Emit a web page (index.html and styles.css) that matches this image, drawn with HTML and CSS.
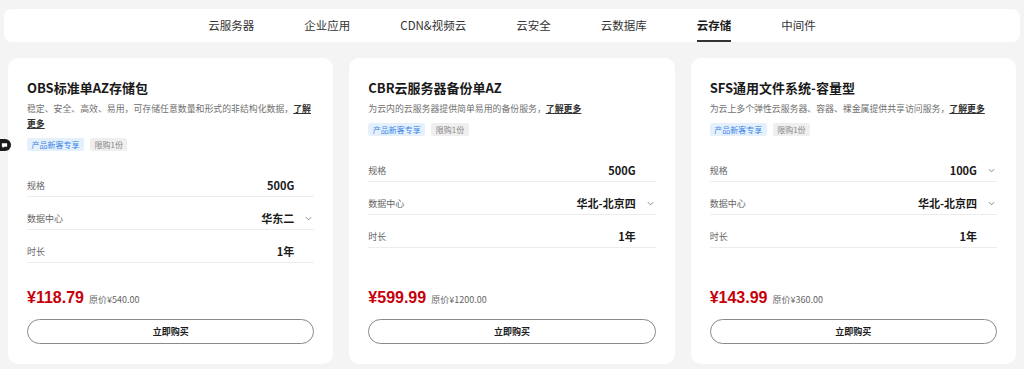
FILE: index.html
```html
<!DOCTYPE html>
<html lang="zh-CN">
<head>
  <meta charset="UTF-8" />
  <meta name="viewport" content="width=device-width, initial-scale=1.0"/>
  <title>云存储</title>
  <link rel="stylesheet" href="styles.css">
</head>
<body>
  <!-- Category tabs -->
  <nav class="tabs">
    <a class="tab">云服务器</a>
    <a class="tab">企业应用</a>
    <a class="tab">CDN&amp;视频云</a>
    <a class="tab">云安全</a>
    <a class="tab">云数据库</a>
    <a class="tab active">云存储</a>
    <a class="tab">中间件</a>
  </nav>

  <!-- Floating chat pill (sits on the left edge) -->
  <div class="chat-pill">
    <svg viewBox="0 0 8 8"><path d="M1 1.5h6v4H3.5L2 7V5.5H1z"/></svg>
  </div>

  <!-- Product cards -->
  <div class="cards">
    <div class="card">
      <h3 class="card-title">OBS标准单AZ存储包</h3>
      <p class="card-desc">稳定、安全、高效、易用，可存储任意数量和形式的非结构化数据，<a class="more">了解更多</a></p>
      <div class="tags">
        <span class="tag tag-blue">产品新客专享</span>
        <span class="tag tag-gray">限购1份</span>
      </div>
      <div class="specs">
        <div class="spec">
          <span class="spec-label">规格</span>
          <span class="spec-value">500G</span>
          <span class="spec-arrow"></span>
        </div>
        <div class="spec">
          <span class="spec-label">数据中心</span>
          <span class="spec-value">华东二</span>
          <span class="spec-arrow"><svg viewBox="0 0 8 5"><path d="M1 1l3 3 3-3"/></svg></span>
        </div>
        <div class="spec">
          <span class="spec-label">时长</span>
          <span class="spec-value">1年</span>
          <span class="spec-arrow"></span>
        </div>
      </div>
      <div class="price-line">
        <span class="price">¥118.79</span>
        <span class="price-old">原价¥540.00</span>
      </div>
      <button class="buy-btn">立即购买</button>
    </div>

    <div class="card">
      <h3 class="card-title">CBR云服务器备份单AZ</h3>
      <p class="card-desc">为云内的云服务器提供简单易用的备份服务，<a class="more">了解更多</a></p>
      <div class="tags">
        <span class="tag tag-blue">产品新客专享</span>
        <span class="tag tag-gray">限购1份</span>
      </div>
      <div class="specs">
        <div class="spec">
          <span class="spec-label">规格</span>
          <span class="spec-value">500G</span>
          <span class="spec-arrow"></span>
        </div>
        <div class="spec">
          <span class="spec-label">数据中心</span>
          <span class="spec-value">华北-北京四</span>
          <span class="spec-arrow"><svg viewBox="0 0 8 5"><path d="M1 1l3 3 3-3"/></svg></span>
        </div>
        <div class="spec">
          <span class="spec-label">时长</span>
          <span class="spec-value">1年</span>
          <span class="spec-arrow"></span>
        </div>
      </div>
      <div class="price-line">
        <span class="price">¥599.99</span>
        <span class="price-old">原价¥1200.00</span>
      </div>
      <button class="buy-btn">立即购买</button>
    </div>

    <div class="card">
      <h3 class="card-title">SFS通用文件系统-容量型</h3>
      <p class="card-desc">为云上多个弹性云服务器、容器、裸金属提供共享访问服务，<a class="more">了解更多</a></p>
      <div class="tags">
        <span class="tag tag-blue">产品新客专享</span>
        <span class="tag tag-gray">限购1份</span>
      </div>
      <div class="specs">
        <div class="spec">
          <span class="spec-label">规格</span>
          <span class="spec-value">100G</span>
          <span class="spec-arrow"><svg viewBox="0 0 8 5"><path d="M1 1l3 3 3-3"/></svg></span>
        </div>
        <div class="spec">
          <span class="spec-label">数据中心</span>
          <span class="spec-value">华北-北京四</span>
          <span class="spec-arrow"><svg viewBox="0 0 8 5"><path d="M1 1l3 3 3-3"/></svg></span>
        </div>
        <div class="spec">
          <span class="spec-label">时长</span>
          <span class="spec-value">1年</span>
          <span class="spec-arrow"></span>
        </div>
      </div>
      <div class="price-line">
        <span class="price">¥143.99</span>
        <span class="price-old">原价¥360.00</span>
      </div>
      <button class="buy-btn">立即购买</button>
    </div>
  </div>
</body>
</html>
```

FILE: styles.css
```css
/* Global Styles */
body {
  font-family: "Noto Sans CJK SC", "Noto Sans", sans-serif;
  background: #f4f4f4;
  color: #252b3a;
  margin: 0;
  padding: 9px 4px 0;
}

/* Tabs */
.tabs {
  display: flex;
  justify-content: center;
  gap: 50px;
  height: 33px;
  background: #fff;
  border-radius: 8px;
}

.tab {
  display: flex;
  align-items: center;
  height: 31px;
  font-size: 11.5px;
  color: #333;
  border-bottom: 2px solid transparent;
  cursor: pointer;
}

.tab.active {
  font-weight: bold;
  color: #1a1a1a;
  border-bottom-color: #333;
}

/* Floating chat pill */
.chat-pill {
  position: fixed;
  left: -8px;
  top: 139px;
  width: 19px;
  height: 12px;
  border-radius: 6px;
  background: #1a1a1a;
  display: flex;
  align-items: center;
  justify-content: flex-end;
  padding-right: 3px;
  box-sizing: border-box;
}

.chat-pill svg {
  width: 7px;
  height: 7px;
  fill: #fff;
}

/* Cards */
.cards {
  display: grid;
  grid-template-columns: repeat(3, 1fr);
  gap: 16px;
  padding: 0 4px;
  margin-top: 16px;
}

.card {
  display: flex;
  flex-direction: column;
  background: #fff;
  border-radius: 10px;
  padding: 21px 19px 20px;
  height: 306px;
  box-sizing: border-box;
}

.card-title {
  margin: 0;
  font-size: 13px;
  line-height: 18px;
  font-weight: bold;
  color: #1a1a1a;
}

.card-desc {
  margin: 4px 0 0;
  font-size: 8.9px;
  line-height: 15px;
  color: #707070;
}

.more {
  color: #333;
  font-weight: bold;
  text-decoration: underline;
  cursor: pointer;
}

.tags {
  display: flex;
  gap: 6px;
  margin-top: 7px;
}

.tag {
  font-size: 8px;
  line-height: 13px;
  padding: 0 4.5px;
  border-radius: 2px;
}

.tag-blue {
  background: #e5f0fd;
  color: #3a84e8;
}

.tag-gray {
  background: #efefef;
  color: #888;
}

.specs {
  margin-top: 13px;
}

.spec {
  display: flex;
  align-items: center;
  height: 33px;
  padding-top: 10px;
  box-sizing: border-box;
  border-bottom: 1px solid #ececec;
}

.spec-label {
  flex: 1;
  font-size: 9px;
  color: #666;
}

.spec-value {
  font-size: 11px;
  font-weight: bold;
  color: #1a1a1a;
}

.spec-arrow {
  width: 20px;
  display: flex;
  justify-content: flex-end;
  padding-right: 2px;
  box-sizing: border-box;
}

.spec-arrow svg {
  width: 7px;
  height: 5px;
  fill: none;
  stroke: #777;
  stroke-width: 1;
}

/* Price and button */
.price-line {
  margin-top: auto;
  display: flex;
  align-items: baseline;
  gap: 5px;
  line-height: 20px;
}

.price {
  font-family: "Liberation Sans", Arial, sans-serif;
  font-size: 16px;
  font-weight: bold;
  color: #c7000b;
}

.price-old {
  font-size: 9px;
  color: #666;
}

.buy-btn {
  margin-top: 9px;
  height: 25px;
  border: 1px solid #8a8a8a;
  border-radius: 13px;
  background: #fff;
  font-family: inherit;
  font-size: 9px;
  font-weight: bold;
  color: #1a1a1a;
  cursor: pointer;
}
```
